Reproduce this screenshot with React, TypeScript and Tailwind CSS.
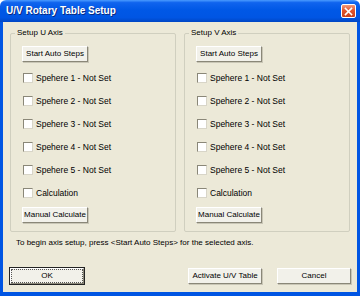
import React from 'react';

const font = { fontFamily: '"Liberation Sans", Arial, sans-serif' };

function XpButton({ label, className = '', isDefault = false }: { label: string; className?: string; isDefault?: boolean }) {
  return (
    <div
      className={`flex items-center justify-center h-[16px] bg-[#f2f1ea] border border-t-[#ffffff] border-l-[#ffffff] border-r-[#8a8778] border-b-[#8a8778] shadow-[1px_1px_0_#c9c6b6] text-[8px] leading-[10px] text-black ${
        isDefault ? 'outline outline-1 outline-[#222]' : ''
      } ${className}`}
    >
      {isDefault ? (
        <span className="flex items-center justify-center w-full h-full border border-dotted border-[#555]">{label}</span>
      ) : (
        label
      )}
    </div>
  );
}

function CheckRow({ label }: { label: string }) {
  return (
    <div className="flex items-center h-[10px] ml-[1px]">
      <div className="w-[10px] h-[10px] bg-white border border-t-[#8a8778] border-l-[#8a8778] border-r-[#d8d5c8] border-b-[#d8d5c8]" />
      <span className="ml-[3px] text-[8.5px] leading-[10px] text-black whitespace-nowrap">{label}</span>
    </div>
  );
}

function AxisGroup({ title }: { title: string }) {
  return (
    <div className="relative w-[166px] h-[199px] border border-[#d0cfbf] rounded-[2px] pl-[11px] pt-[12px] flex flex-col">
      <span className="absolute -top-[6px] left-[4px] px-[2px] bg-[#ece9d8] text-[8px] leading-[10px] text-black">
        {title}
      </span>
      <XpButton label="Start Auto Steps" className="w-[66px]" />
      <div className="mt-[11px] flex flex-col gap-[13px]">
        {[1, 2, 3, 4, 5].map((n) => (
          <CheckRow key={n} label={`Spehere ${n} - Not Set`} />
        ))}
        <CheckRow label="Calculation" />
      </div>
      <XpButton label="Manual Calculate" className="w-[66px] mt-[9px]" />
    </div>
  );
}

export default function App() {
  return (
    <div className="w-[360px] h-[296px] flex flex-col bg-white" style={font}>
      {/* Title bar */}
      <div className="h-[22px] flex items-center justify-between pl-[6px] pr-[4px] rounded-t-[6px] bg-[linear-gradient(180deg,#4a9bff_0%,#1064ee_12%,#0058e6_45%,#0055e3_80%,#0046c4_100%)]">
        <span className="text-white font-bold text-[10px] leading-[12px] [text-shadow:1px_1px_0_#0a2a80]">
          U/V Rotary Table Setup
        </span>
        <div className="w-[15px] h-[14px] rounded-[2px] border border-white bg-[linear-gradient(180deg,#f29a7c_0%,#e2552d_45%,#c8401c_100%)] flex items-center justify-center">
          <svg width="9" height="9" viewBox="0 0 9 9">
            <path d="M1.5 1.5 L7.5 7.5 M7.5 1.5 L1.5 7.5" stroke="white" strokeWidth="1.6" strokeLinecap="square" />
          </svg>
        </div>
      </div>

      {/* Body */}
      <div className="flex-1 flex flex-col bg-[#ece9d8] border-l-[3px] border-r-[3px] border-b-[4px] border-[#0055e3]">
        <div className="flex gap-[8px] pl-[7px] pt-[11px]">
          <AxisGroup title="Setup U Axis" />
          <AxisGroup title="Setup V Axis" />
        </div>

        <p className="mt-[6px] pl-[13px] text-[8px] leading-[10px] text-black whitespace-nowrap">
          To begin axis setup, press &lt;Start Auto Steps&gt; for the selected axis.
        </p>

        <div className="mt-auto mb-[8px] flex items-center pl-[7px] pr-[6px]">
          <XpButton label="OK" isDefault className="w-[74px]" />
          <div className="ml-auto flex gap-[15px]">
            <XpButton label="Activate U/V Table" className="w-[74px]" />
            <XpButton label="Cancel" className="w-[74px]" />
          </div>
        </div>
      </div>
    </div>
  );
}
